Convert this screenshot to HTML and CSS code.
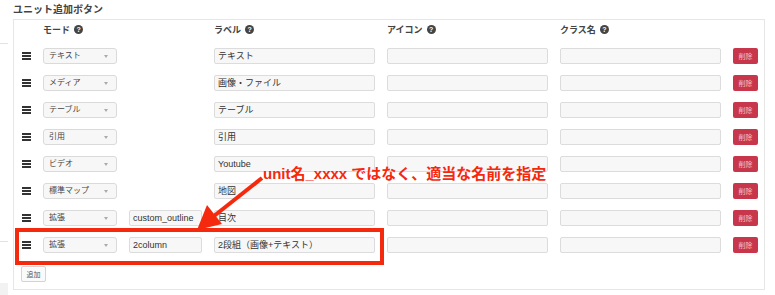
FILE: index.html
```html
<!DOCTYPE html>
<html lang="ja">
<head>
  <meta charset="UTF-8">
  <title>ユニット追加ボタン</title>
  <link rel="stylesheet" href="styles.css">
</head>
<body>
  <div class="edge edge-top"></div>
  <div class="edge edge-mid"></div>
  <div class="edge edge-bottom"></div>

  <h3 class="title">ユニット追加ボタン</h3>
  <div class="panel">
    <div class="units">
      <div class="head"></div>
      <div class="head">モード <span class="help">?</span></div>
      <div class="head"></div>
      <div class="head">ラベル <span class="help">?</span></div>
      <div class="head">アイコン <span class="help">?</span></div>
      <div class="head">クラス名 <span class="help">?</span></div>
      <div class="head"></div>

      <span class="handle"><i></i><i></i><i></i></span>
      <div class="select">テキスト</div>
      <span></span>
      <div class="field">テキスト</div>
      <div class="field"></div>
      <div class="field"></div>
      <button class="del">削除</button>

      <span class="handle"><i></i><i></i><i></i></span>
      <div class="select">メディア</div>
      <span></span>
      <div class="field">画像・ファイル</div>
      <div class="field"></div>
      <div class="field"></div>
      <button class="del">削除</button>

      <span class="handle"><i></i><i></i><i></i></span>
      <div class="select">テーブル</div>
      <span></span>
      <div class="field">テーブル</div>
      <div class="field"></div>
      <div class="field"></div>
      <button class="del">削除</button>

      <span class="handle"><i></i><i></i><i></i></span>
      <div class="select">引用</div>
      <span></span>
      <div class="field">引用</div>
      <div class="field"></div>
      <div class="field"></div>
      <button class="del">削除</button>

      <span class="handle"><i></i><i></i><i></i></span>
      <div class="select">ビデオ</div>
      <span></span>
      <div class="field">Youtube</div>
      <div class="field"></div>
      <div class="field"></div>
      <button class="del">削除</button>

      <span class="handle"><i></i><i></i><i></i></span>
      <div class="select">標準マップ</div>
      <span></span>
      <div class="field">地図</div>
      <div class="field"></div>
      <div class="field"></div>
      <button class="del">削除</button>

      <span class="handle"><i></i><i></i><i></i></span>
      <div class="select">拡張</div>
      <div class="field">custom_outline</div>
      <div class="field">目次</div>
      <div class="field"></div>
      <div class="field"></div>
      <button class="del">削除</button>

      <span class="handle"><i></i><i></i><i></i></span>
      <div class="select">拡張</div>
      <div class="field">2column</div>
      <div class="field">2段組（画像+テキスト）</div>
      <div class="field"></div>
      <div class="field"></div>
      <button class="del">削除</button>
    </div>
    <button class="add">追加</button>
  </div>

  <!-- annotation -->
  <svg class="mark" width="775" height="295" viewBox="0 0 775 295">
    <rect x="17" y="230" width="365" height="33" fill="none" stroke="#f5290e" stroke-width="4"/>
    <line x1="262" y1="178" x2="214" y2="216" stroke="#f5290e" stroke-width="4"/>
    <polygon points="197,230 207,205 222,224" fill="#f5290e"/>
  </svg>
  <div class="note">unit名_xxxx ではなく、適当な名前を指定</div>
</body>
</html>
```

FILE: styles.css
```css
body {
  margin: 0;
  padding: 4px 10px 0 13px;
  font-family: "Liberation Sans", "Noto Sans CJK JP", sans-serif;
  color: #333;
  background: #fff;
  position: relative;
  width: 752px;
  height: 291px;
  overflow: hidden;
}
.title {
  margin: 0 0 3px 0;
  font-size: 10px;
  line-height: 12px;
  font-weight: bold;
  color: #444;
}
.panel {
  box-sizing: border-box;
  border: 1px solid #e6e6e6;
  padding: 0 6px 6px 7px;
  height: 271px;
}
.units {
  display: grid;
  grid-template-columns: 10px 74px 73px 161px 161px 161px 25px;
  grid-template-rows: 17px;
  grid-auto-rows: 16px;
  column-gap: 12px;
  row-gap: 11px;
  align-items: center;
}
.head {
  font-size: 9px;
  font-weight: bold;
  color: #444;
  display: flex;
  align-items: center;
  gap: 4px;
  margin-top: 2px;
}
.help {
  display: inline-block;
  width: 9px;
  height: 9px;
  border-radius: 50%;
  background: #444;
  color: #fff;
  font-size: 7px;
  line-height: 9px;
  text-align: center;
  font-weight: bold;
}
.handle {
  display: flex;
  flex-direction: column;
  gap: 1.5px;
  width: 9px;
  padding-left: 1px;
}
.handle i {
  display: block;
  height: 1.6px;
  background: #333;
}
.select {
  height: 16px;
  box-sizing: border-box;
  border: 1px solid #dadada;
  border-radius: 3px;
  background: #f7f7f7;
  font-size: 8px;
  line-height: 14px;
  padding-left: 5px;
  color: #444;
  position: relative;
}
.select::after {
  content: "";
  position: absolute;
  right: 8px;
  top: 6px;
  border-left: 2.5px solid transparent;
  border-right: 2.5px solid transparent;
  border-top: 3px solid #aaa;
}
.field {
  height: 16px;
  box-sizing: border-box;
  border: 1px solid #dcdcdc;
  border-radius: 2px;
  background: #f7f7f7;
  font-size: 9px;
  line-height: 14px;
  padding-left: 3px;
  color: #333;
}
.del {
  height: 16px;
  width: 25px;
  padding: 0;
  border: none;
  border-radius: 2px;
  background: #c8364b;
  color: #f1c2ca;
  font-family: "Noto Sans CJK JP", sans-serif;
  font-size: 7px;
}
.add {
  margin-top: 13px;
  height: 16px;
  width: 25px;
  padding: 0;
  border: 1px solid #d4d4d4;
  border-radius: 2px;
  background: #fafafa;
  color: #555;
  font-family: "Noto Sans CJK JP", sans-serif;
  font-size: 7px;
}
.edge {
  position: absolute;
  left: 0;
  width: 8px;
  height: 1px;
  background: #e2e2e2;
}
.edge-top { top: 43px; }
.edge-mid { top: 241px; }
.edge-bottom { top: 283px; height: 12px; background: #f2f2f2; }
.mark {
  position: absolute;
  left: 0;
  top: 0;
  pointer-events: none;
}
.note {
  position: absolute;
  left: 263px;
  top: 162px;
  font-size: 15px;
  font-weight: bold;
  color: #f5290e;
  white-space: nowrap;
}
```
